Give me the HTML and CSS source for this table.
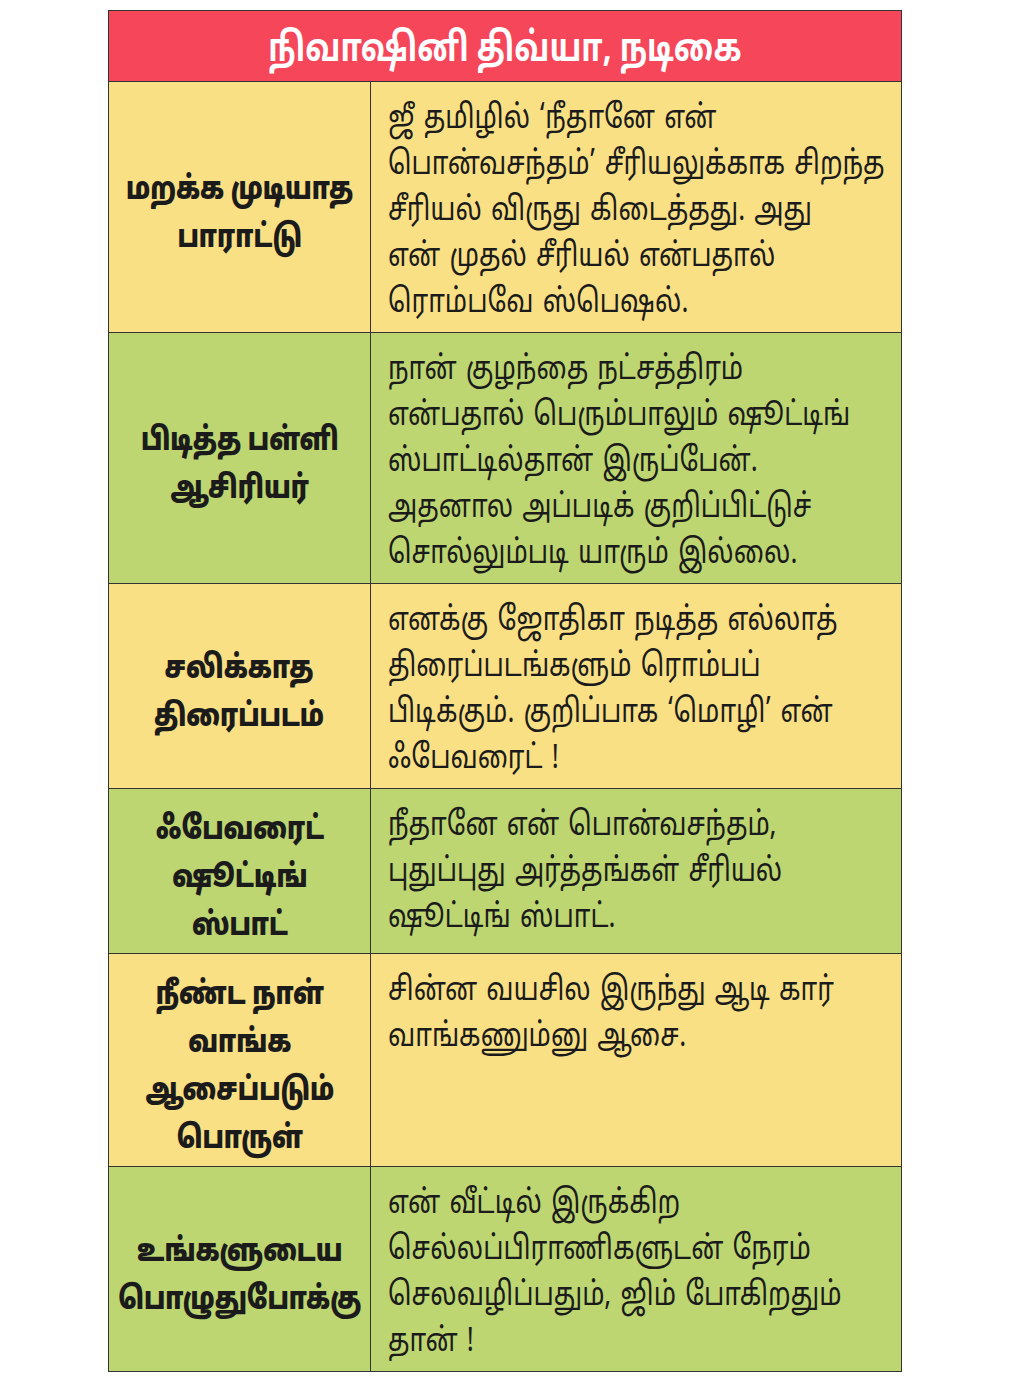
FILE: index.html
```html
<!DOCTYPE html>
<html lang="ta">
<head>
<meta charset="utf-8">
<title>நிவாஷினி திவ்யா, நடிகை</title>
<link rel="stylesheet" href="styles.css">
</head>
<body>
<div class="card">
  <div class="title"><span class="t">நிவாஷினி திவ்யா, நடிகை</span></div>
  <div class="row yellow">
    <div class="q"><span class="t">மறக்க முடியாத<br>பாராட்டு</span></div>
    <div class="a"><span class="t">ஜீ தமிழில் ‘நீதானே என்<br>பொன்வசந்தம்’ சீரியலுக்காக சிறந்த<br>சீரியல் விருது கிடைத்தது. அது<br>என் முதல் சீரியல் என்பதால்<br>ரொம்பவே ஸ்பெஷல்.</span></div>
  </div>
  <div class="row green">
    <div class="q"><span class="t">பிடித்த பள்ளி<br>ஆசிரியர்</span></div>
    <div class="a"><span class="t">நான் குழந்தை நட்சத்திரம்<br>என்பதால் பெரும்பாலும் ஷூட்டிங்<br>ஸ்பாட்டில்தான் இருப்பேன்.<br>அதனால அப்படிக் குறிப்பிட்டுச்<br>சொல்லும்படி யாரும் இல்லை.</span></div>
  </div>
  <div class="row yellow">
    <div class="q"><span class="t">சலிக்காத<br>திரைப்படம்</span></div>
    <div class="a"><span class="t">எனக்கு ஜோதிகா நடித்த எல்லாத்<br>திரைப்படங்களும் ரொம்பப்<br>பிடிக்கும். குறிப்பாக ‘மொழி’ என்<br>ஃபேவரைட் !</span></div>
  </div>
  <div class="row green">
    <div class="q"><span class="t">ஃபேவரைட்<br>ஷூட்டிங்<br>ஸ்பாட்</span></div>
    <div class="a"><span class="t">நீதானே என் பொன்வசந்தம்,<br>புதுப்புது அர்த்தங்கள் சீரியல்<br>ஷூட்டிங் ஸ்பாட்.</span></div>
  </div>
  <div class="row yellow">
    <div class="q"><span class="t">நீண்ட நாள்<br>வாங்க<br>ஆசைப்படும்<br>பொருள்</span></div>
    <div class="a"><span class="t">சின்ன வயசில இருந்து ஆடி கார்<br>வாங்கணும்னு ஆசை.</span></div>
  </div>
  <div class="row green">
    <div class="q"><span class="t">உங்களுடைய<br>பொழுதுபோக்கு</span></div>
    <div class="a"><span class="t">என் வீட்டில் இருக்கிற<br>செல்லப்பிராணிகளுடன் நேரம்<br>செலவழிப்பதும், ஜிம் போகிறதும்<br>தான் !</span></div>
  </div>
</div>
</body>
</html>
```

FILE: styles.css
```css
html, body {
  margin: 0;
  padding: 0;
  background: #ffffff;
}
body {
  font-family: "Noto Sans Tamil", "Lohit Tamil", "Noto Sans", "Liberation Sans", sans-serif;
  color: #1b1b1b;
}
.card {
  margin: 10px 0 0 108px;
  width: 794px;
  border: 1px solid #333333;
  box-sizing: border-box;
}
.title {
  background: #f5465a;
  color: #ffffff;
  font-weight: 700;
  font-size: 40px;
  height: 71px;
  box-sizing: border-box;
  padding-top: 10px;
  line-height: 61px;
  text-align: center;
  border-bottom: 1px solid #333333;
}
.title .t {
  display: block;
  transform: scaleX(0.77);
  transform-origin: center;
}
.row {
  display: grid;
  grid-template-columns: 262px minmax(0, 1fr);
  border-bottom: 1px solid #333333;
}
.row:last-child { border-bottom: 0; }
.yellow { background: #f9e085; }
.green { background: #bdd672; }
.q {
  border-right: 1px solid #333333;
  display: flex;
  align-items: center;
  justify-content: center;
  text-align: center;
  font-weight: 900;
  font-size: 32px;
  line-height: 48px;
  padding: 18px 0 2px;
  white-space: nowrap;
}
.q .t {
  display: block;
  transform: scaleX(0.78);
  transform-origin: center;
}
.a {
  font-size: 33px;
  line-height: 46px;
  padding: 15px 0 5px 17px;
  white-space: nowrap;
  word-spacing: 3px;
}
.a .t {
  display: block;
  transform: scaleX(0.79);
  transform-origin: left center;
}
```
